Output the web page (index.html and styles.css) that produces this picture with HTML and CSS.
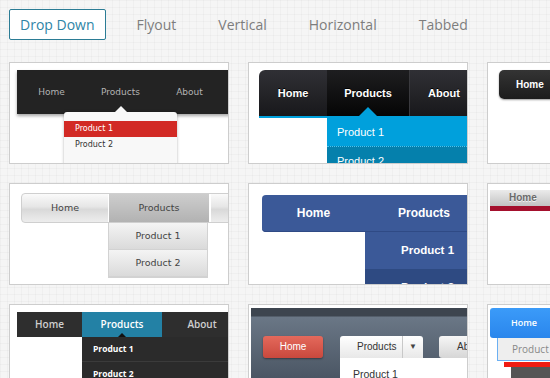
FILE: index.html
```html
<!DOCTYPE html>
<html lang="en">
<head>
  <meta charset="UTF-8">
  <meta name="viewport" content="width=device-width, initial-scale=1.0">
  <title>Drop Down Menus</title>
  <link rel="stylesheet" href="styles.css">
</head>
<body>

  <ul class="tabs">
    <li class="active">Drop Down</li>
    <li>Flyout</li>
    <li>Vertical</li>
    <li>Horizontal</li>
    <li>Tabbed</li>
  </ul>

  <div class="gallery">

    <div class="card">
      <div class="m1">
        <ul class="m1-bar"><li>Home</li><li>Products</li><li>About</li></ul>
        <ul class="m1-drop"><li class="on">Product 1</li><li>Product 2</li></ul>
      </div>
    </div>

    <div class="card">
      <div class="m2">
        <ul class="m2-bar"><li class="home">Home</li><li class="on">Products</li><li class="about">About</li></ul>
        <ul class="m2-drop"><li>Product 1</li><li class="dark">Product 2</li></ul>
      </div>
    </div>

    <div class="card">
      <div class="m3">
        <div class="m3-btn">Home</div>
      </div>
    </div>

    <div class="card">
      <div class="m4">
        <ul class="m4-bar"><li class="home">Home</li><li class="on">Products</li><li class="about"></li></ul>
        <ul class="m4-drop"><li>Product 1</li><li>Product 2</li></ul>
      </div>
    </div>

    <div class="card">
      <div class="m5">
        <ul class="m5-bar"><li class="home">Home</li><li class="on">Products</li></ul>
        <ul class="m5-drop"><li>Product 1</li><li class="dark">Product 2</li></ul>
      </div>
    </div>

    <div class="card">
      <div class="m6">
        <div class="m6-bar">Home</div>
      </div>
    </div>

    <div class="card">
      <div class="m7">
        <ul class="m7-bar"><li class="home">Home</li><li class="on">Products</li><li class="about">About</li></ul>
        <ul class="m7-drop"><li>Product 1</li><li>Product 2</li></ul>
      </div>
    </div>

    <div class="card">
      <div class="m8">
        <div class="m8-row">
          <div class="m8-home">Home</div>
          <div class="m8-products">
            <span class="label">Products</span><span class="caret">&#9660;</span>
            <ul class="m8-drop"><li>Product 1</li></ul>
          </div>
          <div class="m8-about">About</div>
        </div>
      </div>
    </div>

    <div class="card">
      <div class="m9">
        <div class="m9-btn">Home</div>
        <div class="m9-drop">Product 1</div>
        <div class="m9-red"></div>
        <div class="m9-gray"></div>
      </div>
    </div>

  </div>

</body>
</html>
```

FILE: styles.css
```css
html, body {
  margin: 0;
  padding: 0;
  height: 100%;
  overflow: hidden;
}

body {
  font-family: "Open Sans", sans-serif;
  background-color: #f5f5f5;
  background-image:
    linear-gradient(rgba(0, 0, 0, 0.025) 1px, transparent 1px),
    linear-gradient(90deg, rgba(0, 0, 0, 0.025) 1px, transparent 1px);
  background-size: 7px 7px;
}

ul {
  list-style: none;
  margin: 0;
  padding: 0;
}

/* top tabs */
.tabs {
  display: flex;
  gap: 20px;
  padding: 9px 0 0 9px;
}

.tabs li {
  height: 29px;
  line-height: 29px;
  padding: 0 10px;
  border: 1px solid transparent;
  border-radius: 2px;
  font-size: 14px;
  color: #7d7d7d;
}

.tabs li.active {
  border-color: #2b7c95;
  color: #2e84a6;
  background-color: #fff;
}

/* thumbnails */
.gallery {
  display: grid;
  grid-template-columns: repeat(3, 220px);
  grid-auto-rows: 102px;
  column-gap: 19px;
  row-gap: 19px;
  padding-left: 9px;
  margin-top: 22px;
}

.card {
  box-sizing: border-box;
  background-color: #fff;
  border: 1px solid #cdcdcd;
  overflow: hidden;
}

/* 1: dark bar, red item */
.m1 {
  padding: 7px 0 0 7px;
}

.m1-bar {
  display: flex;
  width: 240px;
  height: 44px;
  background-color: #232323;
  box-shadow: 0 2px 3px rgba(0, 0, 0, 0.35);
}

.m1-bar li {
  width: 69px;
  text-align: center;
  line-height: 44px;
  font-family: "DejaVu Sans", sans-serif;
  font-size: 9px;
  color: #b3b3b3;
}

.m1-drop {
  position: relative;
  width: 113px;
  height: 60px;
  margin: -2px 0 0 47px;
  padding-top: 9px;
  box-sizing: border-box;
  background-color: #f8f8f8;
  border-radius: 3px 3px 0 0;
  box-shadow: 0 0 3px rgba(0, 0, 0, 0.3);
}

.m1-drop::before {
  content: "";
  position: absolute;
  top: -12px;
  left: 51px;
  border: 6px solid transparent;
  border-bottom-color: #f8f8f8;
}

.m1-drop li {
  height: 16px;
  line-height: 16px;
  padding-left: 11px;
  font-family: "DejaVu Sans", sans-serif;
  font-size: 8px;
  color: #333;
}

.m1-drop li.on {
  background-color: #d22a25;
  color: #fff;
}

/* 2: black bar, blue drop */
.m2 {
  padding: 7px 0 0 10px;
}

.m2-bar {
  display: flex;
  width: 240px;
  height: 46px;
  border-bottom: 2px solid #00a0dc;
  border-top-left-radius: 6px;
  background: linear-gradient(#303035, #18181b);
  overflow: hidden;
}

.m2-bar li {
  position: relative;
  line-height: 46px;
  text-align: center;
  font-family: "Liberation Sans", Arial, sans-serif;
  font-weight: bold;
  font-size: 11px;
  color: #fff;
  text-shadow: 0 -1px 0 #000;
}

.m2-bar .home { width: 68px; }
.m2-bar .about { width: 68px; border-left: 1px solid #3a3a3e; }

.m2-bar li.on {
  width: 82px;
  background: linear-gradient(#1e1e20, #050505);
  overflow: visible;
}

.m2-bar li.on::after {
  content: "";
  position: absolute;
  bottom: 0;
  left: 32px;
  border: 9px solid transparent;
  border-bottom-color: #00a0dc;
}

.m2-drop {
  width: 200px;
  margin-left: 68px;
}

.m2-drop li {
  height: 28px;
  line-height: 28px;
  padding-left: 10px;
  font-family: "Liberation Sans", Arial, sans-serif;
  font-size: 11px;
  color: #fff;
  background-color: #00a0dc;
}

.m2-drop li.dark {
  background-color: #0580ac;
  border-top: 1px dotted #4cc3ee;
}

/* 3: dark rounded button */
.m3 {
  padding: 7px 0 0 11px;
}

.m3-btn {
  width: 200px;
  height: 29px;
  line-height: 29px;
  padding-left: 17px;
  border-radius: 5px;
  background: linear-gradient(#343434, #1c1c1c);
  box-shadow: 0 1px 2px rgba(0, 0, 0, 0.4);
  font-family: "Liberation Sans", Arial, sans-serif;
  font-weight: bold;
  font-size: 10px;
  color: #fff;
}

/* 4: silver bar */
.m4 {
  padding: 9px 0 0 11px;
}

.m4-bar {
  display: flex;
  width: 300px;
  height: 30px;
  box-sizing: border-box;
  border: 1px solid #cfcfcf;
  border-radius: 4px 0 0 4px;
  background: linear-gradient(#fafafa, #e6e6e6 45%, #d9d9d9 55%, #ededed);
}

.m4-bar li {
  line-height: 28px;
  text-align: center;
  font-family: "DejaVu Sans", sans-serif;
  font-size: 9.5px;
  color: #444;
}

.m4-bar .home { width: 86px; }
.m4-bar .about { width: 100px; border-left: 2px solid #fff; }

.m4-bar li.on {
  width: 100px;
  background: linear-gradient(#cdcdcd, #b2b2b2);
  border-left: 1px solid #fff;
}

.m4-drop {
  width: 100px;
  margin-left: 87px;
  border: 1px solid #d2d2d2;
  border-top: none;
  box-sizing: border-box;
}

.m4-drop li {
  height: 26px;
  line-height: 26px;
  text-align: center;
  border-bottom: 1px solid #d2d2d2;
  background: linear-gradient(#f4f4f4, #dadada);
  font-family: "DejaVu Sans", sans-serif;
  font-size: 9.5px;
  color: #444;
}

/* 5: facebook blue */
.m5 {
  padding: 11px 0 0 13px;
}

.m5-bar {
  display: flex;
  width: 300px;
  height: 37px;
  border-radius: 4px;
  background-color: #3b5998;
  box-shadow: inset 0 -1px 0 #2f4a85;
}

.m5-bar li {
  line-height: 37px;
  text-align: center;
  font-family: "Liberation Sans", Arial, sans-serif;
  font-weight: bold;
  font-size: 12px;
  color: #fff;
}

.m5-bar .home { width: 103px; }
.m5-bar li.on { width: 118px; }

.m5-drop {
  width: 200px;
  margin-left: 103px;
}

.m5-drop li {
  height: 37px;
  line-height: 37px;
  padding-left: 36px;
  background-color: #3b5998;
  font-family: "Liberation Sans", Arial, sans-serif;
  font-weight: bold;
  font-size: 11.5px;
  color: #fff;
}

.m5-drop li.dark {
  background-color: #2e4a82;
}

/* 6: grey with red line */
.m6 {
  padding: 6px 0 0 2px;
}

.m6-bar {
  width: 200px;
  height: 16px;
  line-height: 16px;
  padding-left: 19px;
  background: linear-gradient(#ebebeb, #c3c3c3);
  border-bottom: 5px solid #a4102d;
  font-family: "Liberation Sans", Arial, sans-serif;
  font-weight: bold;
  font-size: 10px;
  color: #6b6b6b;
  text-shadow: 0 1px 0 #f4f4f4;
}

/* 7: dark with teal item */
.m7 {
  padding: 7px 0 0 7px;
}

.m7-bar {
  display: flex;
  width: 240px;
  height: 25px;
  background-color: #2e2e2e;
}

.m7-bar li {
  position: relative;
  line-height: 25px;
  text-align: center;
  font-size: 10px;
  font-weight: 600;
  color: #cfcfcf;
}

.m7-bar .home { width: 65px; }
.m7-bar .about { width: 80px; }

.m7-bar li.on {
  width: 80px;
  background-color: #2381a5;
  color: #fff;
}

.m7-bar li.on::after {
  content: "";
  position: absolute;
  bottom: 0;
  left: 36px;
  border: 4px solid transparent;
  border-bottom-color: #111;
}

.m7-drop {
  width: 200px;
  margin-left: 65px;
  background-color: #2b2b2b;
}

.m7-drop li {
  height: 24px;
  line-height: 24px;
  padding-left: 11px;
  border-bottom: 1px solid #3b3b3b;
  font-size: 8.5px;
  font-weight: bold;
  color: #fff;
}

/* 8: slate panel with buttons */
.m8 {
  padding: 3px 0 0 2px;
}

.m8-row {
  display: flex;
  align-items: flex-start;
  width: 300px;
  height: 120px;
  padding: 28px 0 0 12px;
  box-sizing: border-box;
  background: linear-gradient(#3d454f 0, #3d454f 8px, #6a7786 9px, #4b5664 70px);
  font-family: "Liberation Sans", Arial, sans-serif;
  font-size: 10px;
}

.m8-home {
  width: 60px;
  height: 22px;
  line-height: 22px;
  text-align: center;
  border-radius: 3px;
  background: linear-gradient(#e4695c, #c9483d);
  box-shadow: 0 1px 2px rgba(0, 0, 0, 0.4);
  color: #fff;
}

.m8-products {
  position: relative;
  display: flex;
  height: 22px;
  line-height: 22px;
  margin-left: 17px;
  border-radius: 3px 3px 0 0;
  background: linear-gradient(#ffffff, #e8e8e8);
  color: #333;
}

.m8-products .label {
  width: 39px;
  padding: 0 6px 0 17px;
}

.m8-products .caret {
  width: 20px;
  text-align: center;
  border-left: 1px solid #c8c8c8;
  font-size: 8px;
  color: #444;
}

.m8-drop {
  position: absolute;
  top: 22px;
  left: 0;
  width: 170px;
  height: 60px;
  background-color: #fff;
}

.m8-drop li {
  padding: 5px 0 0 13px;
  line-height: 22px;
  font-size: 10.5px;
  color: #333;
}

.m8-about {
  width: 60px;
  height: 22px;
  line-height: 22px;
  margin-left: 16px;
  padding-left: 18px;
  border-radius: 3px;
  background: linear-gradient(#f6f6f6, #d6d6d6);
  color: #333;
}

/* 9: bright blue button */
.m9 {
  padding: 3px 0 0 2px;
}

.m9-btn {
  width: 200px;
  height: 30px;
  line-height: 30px;
  padding-left: 21px;
  border-radius: 3px;
  background: linear-gradient(#3b9bf9, #2a86ec);
  font-size: 9px;
  font-weight: 600;
  color: #fff;
}

.m9-drop {
  width: 200px;
  height: 22px;
  line-height: 22px;
  margin-left: 7px;
  padding-left: 14px;
  border: 1px solid #6cb0f2;
  border-top: none;
  background-color: #eeeeee;
  font-size: 10px;
  color: #888;
}

.m9-red {
  height: 5px;
  margin: 1px 0 0 14px;
  background-color: #f01c12;
}

.m9-gray {
  height: 20px;
  margin-left: 21px;
  background-color: #555;
}
```
